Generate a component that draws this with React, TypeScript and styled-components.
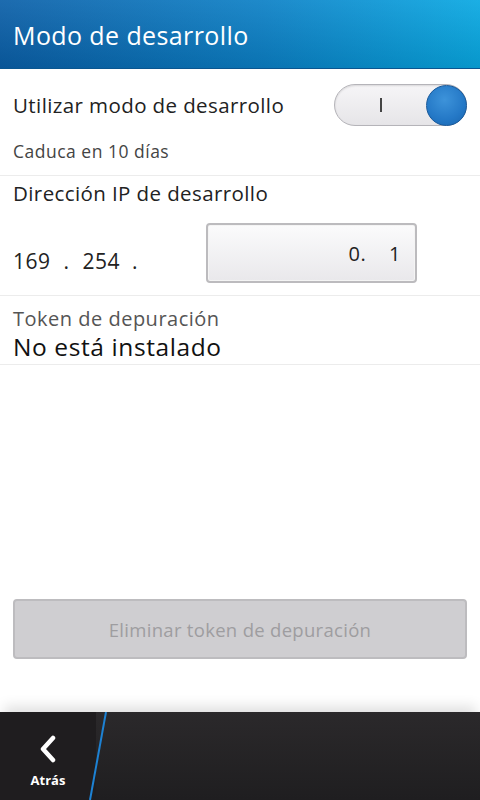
import styled, { createGlobalStyle } from "styled-components";

const GlobalStyle = createGlobalStyle`
  html, body {
    margin: 0;
    padding: 0;
    background: #ffffff;
  }
  body {
    font-family: "Open Sans", "Noto Sans", sans-serif;
    color: #262626;
  }
`;

const Screen = styled.div`
  width: 480px;
  height: 800px;
  display: flex;
  flex-direction: column;
  overflow: hidden;
`;

const TitleBar = styled.header`
  height: 69px;
  flex-shrink: 0;
  display: flex;
  align-items: center;
  padding: 2px 0 0 13px;
  box-sizing: border-box;
  background: linear-gradient(180deg, rgba(255, 255, 255, 0.08), rgba(0, 0, 0, 0.1)),
    linear-gradient(90deg, #0a5fa8 0%, #0b80c6 55%, #08a8e2 100%);
  border-bottom: 1px solid #0a5690;

  h1 {
    margin: 0;
    font-size: 25px;
    font-weight: 400;
    color: #ffffff;
    letter-spacing: 0.4px;
  }
`;

const Content = styled.main`
  flex: 1;
  display: flex;
  flex-direction: column;
`;

const Section = styled.section<{ $height: number }>`
  height: ${(p) => p.$height}px;
  box-sizing: border-box;
  padding: 0 13px;
  display: flex;
  flex-direction: column;
  border-bottom: 1px solid #ececec;
`;

const ToggleRow = styled.div`
  height: 68px;
  display: flex;
  align-items: center;
  justify-content: space-between;
  padding-top: 2px;
`;

const Label = styled.span`
  font-size: 20.5px;
  letter-spacing: 0.4px;
  color: #222222;
  line-height: 1.2;
`;

const Caption = styled.div`
  font-size: 17.5px;
  letter-spacing: 0.5px;
  color: #444444;
`;

const Toggle = styled.div`
  width: 133px;
  height: 42px;
  box-sizing: border-box;
  border-radius: 21px;
  border: 1px solid #b5b4b9;
  background: linear-gradient(180deg, #f6f5f7 0%, #e6e5e8 100%);
  box-shadow: inset 0 1px 2px rgba(0, 0, 0, 0.12);
  display: flex;
  align-items: center;
  justify-content: space-between;
  padding: 0 0 0 45px;
`;

const OnMark = styled.span`
  width: 2px;
  height: 14px;
  background: #444;
`;

const Knob = styled.span`
  width: 41px;
  height: 41px;
  border-radius: 50%;
  box-sizing: border-box;
  background: radial-gradient(circle at 45% 35%, #3d93da 0%, #2478c6 60%, #1a64ad 100%);
  border: 1px solid #19599a;
  margin-right: -1px;
`;

const SectionTitle = styled.div`
  font-size: 20.5px;
  letter-spacing: 0.4px;
  color: #222;
  padding-top: 3px;
`;

const IpRow = styled.div`
  display: flex;
  align-items: center;
  margin-top: 16px;
  font-size: 21px;
  letter-spacing: 0.5px;
  color: #222;
`;

const Octet = styled.span<{ $gap: number }>`
  margin-right: ${(p) => p.$gap}px;
  padding-top: 16px;
`;

const IpInput = styled.div`
  margin-left: auto;
  margin-right: 50px;
  width: 211px;
  height: 60px;
  box-sizing: border-box;
  border: 2px solid #bcbbbe;
  border-radius: 4px;
  background: linear-gradient(180deg, #fbfbfc 0%, #e9e8eb 100%);
  box-shadow: inset 0 0 0 1px #f4f4f4;
  display: flex;
  align-items: center;
  justify-content: flex-end;
  padding-right: 14px;
  font-size: 20px;
  color: #222;
  white-space: pre;
`;

const TokenLabel = styled.div`
  font-size: 20px;
  letter-spacing: 0.5px;
  color: #555555;
  padding-top: 12px;
  line-height: 22px;
`;

const TokenValue = styled.div`
  font-size: 24.5px;
  letter-spacing: 0.6px;
  color: #111111;
  line-height: 28px;
  margin-top: 3px;
`;

const ButtonArea = styled.div`
  margin-top: auto;
  padding: 0 13px 53px;
`;

const DisabledButton = styled.button`
  width: 100%;
  height: 60px;
  border: 2px solid #bdbcbf;
  border-radius: 4px;
  background: #cfced1;
  color: #9e9da0;
  font-family: inherit;
  font-size: 18.5px;
  letter-spacing: 0.3px;
`;

const ActionBar = styled.footer`
  height: 88px;
  flex-shrink: 0;
  position: relative;
  display: flex;
  background: linear-gradient(180deg, #2b292b 0%, #1f1e20 100%);
  box-shadow: 0 -10px 12px -4px rgba(0, 0, 0, 0.12);
`;

const BackButton = styled.div`
  width: 96px;
  display: flex;
  flex-direction: column;
  align-items: center;
  justify-content: center;
  gap: 8px;
  padding-top: 12px;
  background: #1f1d1f;
  color: #ffffff;
  font-size: 13px;
  font-weight: 700;
`;

const Divider = styled.svg`
  position: absolute;
  left: 86px;
  top: 0;
`;

export default function App() {
  return (
    <>
      <GlobalStyle />
      <Screen>
        <TitleBar>
          <h1>Modo de desarrollo</h1>
        </TitleBar>
        <Content>
          <Section $height={107}>
            <ToggleRow>
              <Label>Utilizar modo de desarrollo</Label>
              <Toggle>
                <OnMark />
                <Knob />
              </Toggle>
            </ToggleRow>
            <Caption>Caduca en 10 días</Caption>
          </Section>
          <Section $height={120}>
            <SectionTitle>Dirección IP de desarrollo</SectionTitle>
            <IpRow>
              <Octet $gap={13}>169</Octet>
              <Octet $gap={13}>.</Octet>
              <Octet $gap={12}>254</Octet>
              <Octet $gap={0}>.</Octet>
              <IpInput>{"0.    1"}</IpInput>
            </IpRow>
          </Section>
          <Section $height={69}>
            <TokenLabel>Token de depuración</TokenLabel>
            <TokenValue>No está instalado</TokenValue>
          </Section>
          <ButtonArea>
            <DisabledButton disabled>Eliminar token de depuración</DisabledButton>
          </ButtonArea>
        </Content>
        <ActionBar>
          <BackButton>
            <svg width="18" height="28" viewBox="0 0 18 28">
              <path
                d="M14 3 L4 14 L14 25"
                fill="none"
                stroke="#ffffff"
                strokeWidth="4.5"
                strokeLinecap="round"
                strokeLinejoin="round"
              />
            </svg>
            <span>Atrás</span>
          </BackButton>
          <Divider width="24" height="88" viewBox="0 0 24 88">
            <line x1="20" y1="0" x2="4" y2="88" stroke="#1d82d4" strokeWidth="2" />
          </Divider>
        </ActionBar>
      </Screen>
    </>
  );
}
